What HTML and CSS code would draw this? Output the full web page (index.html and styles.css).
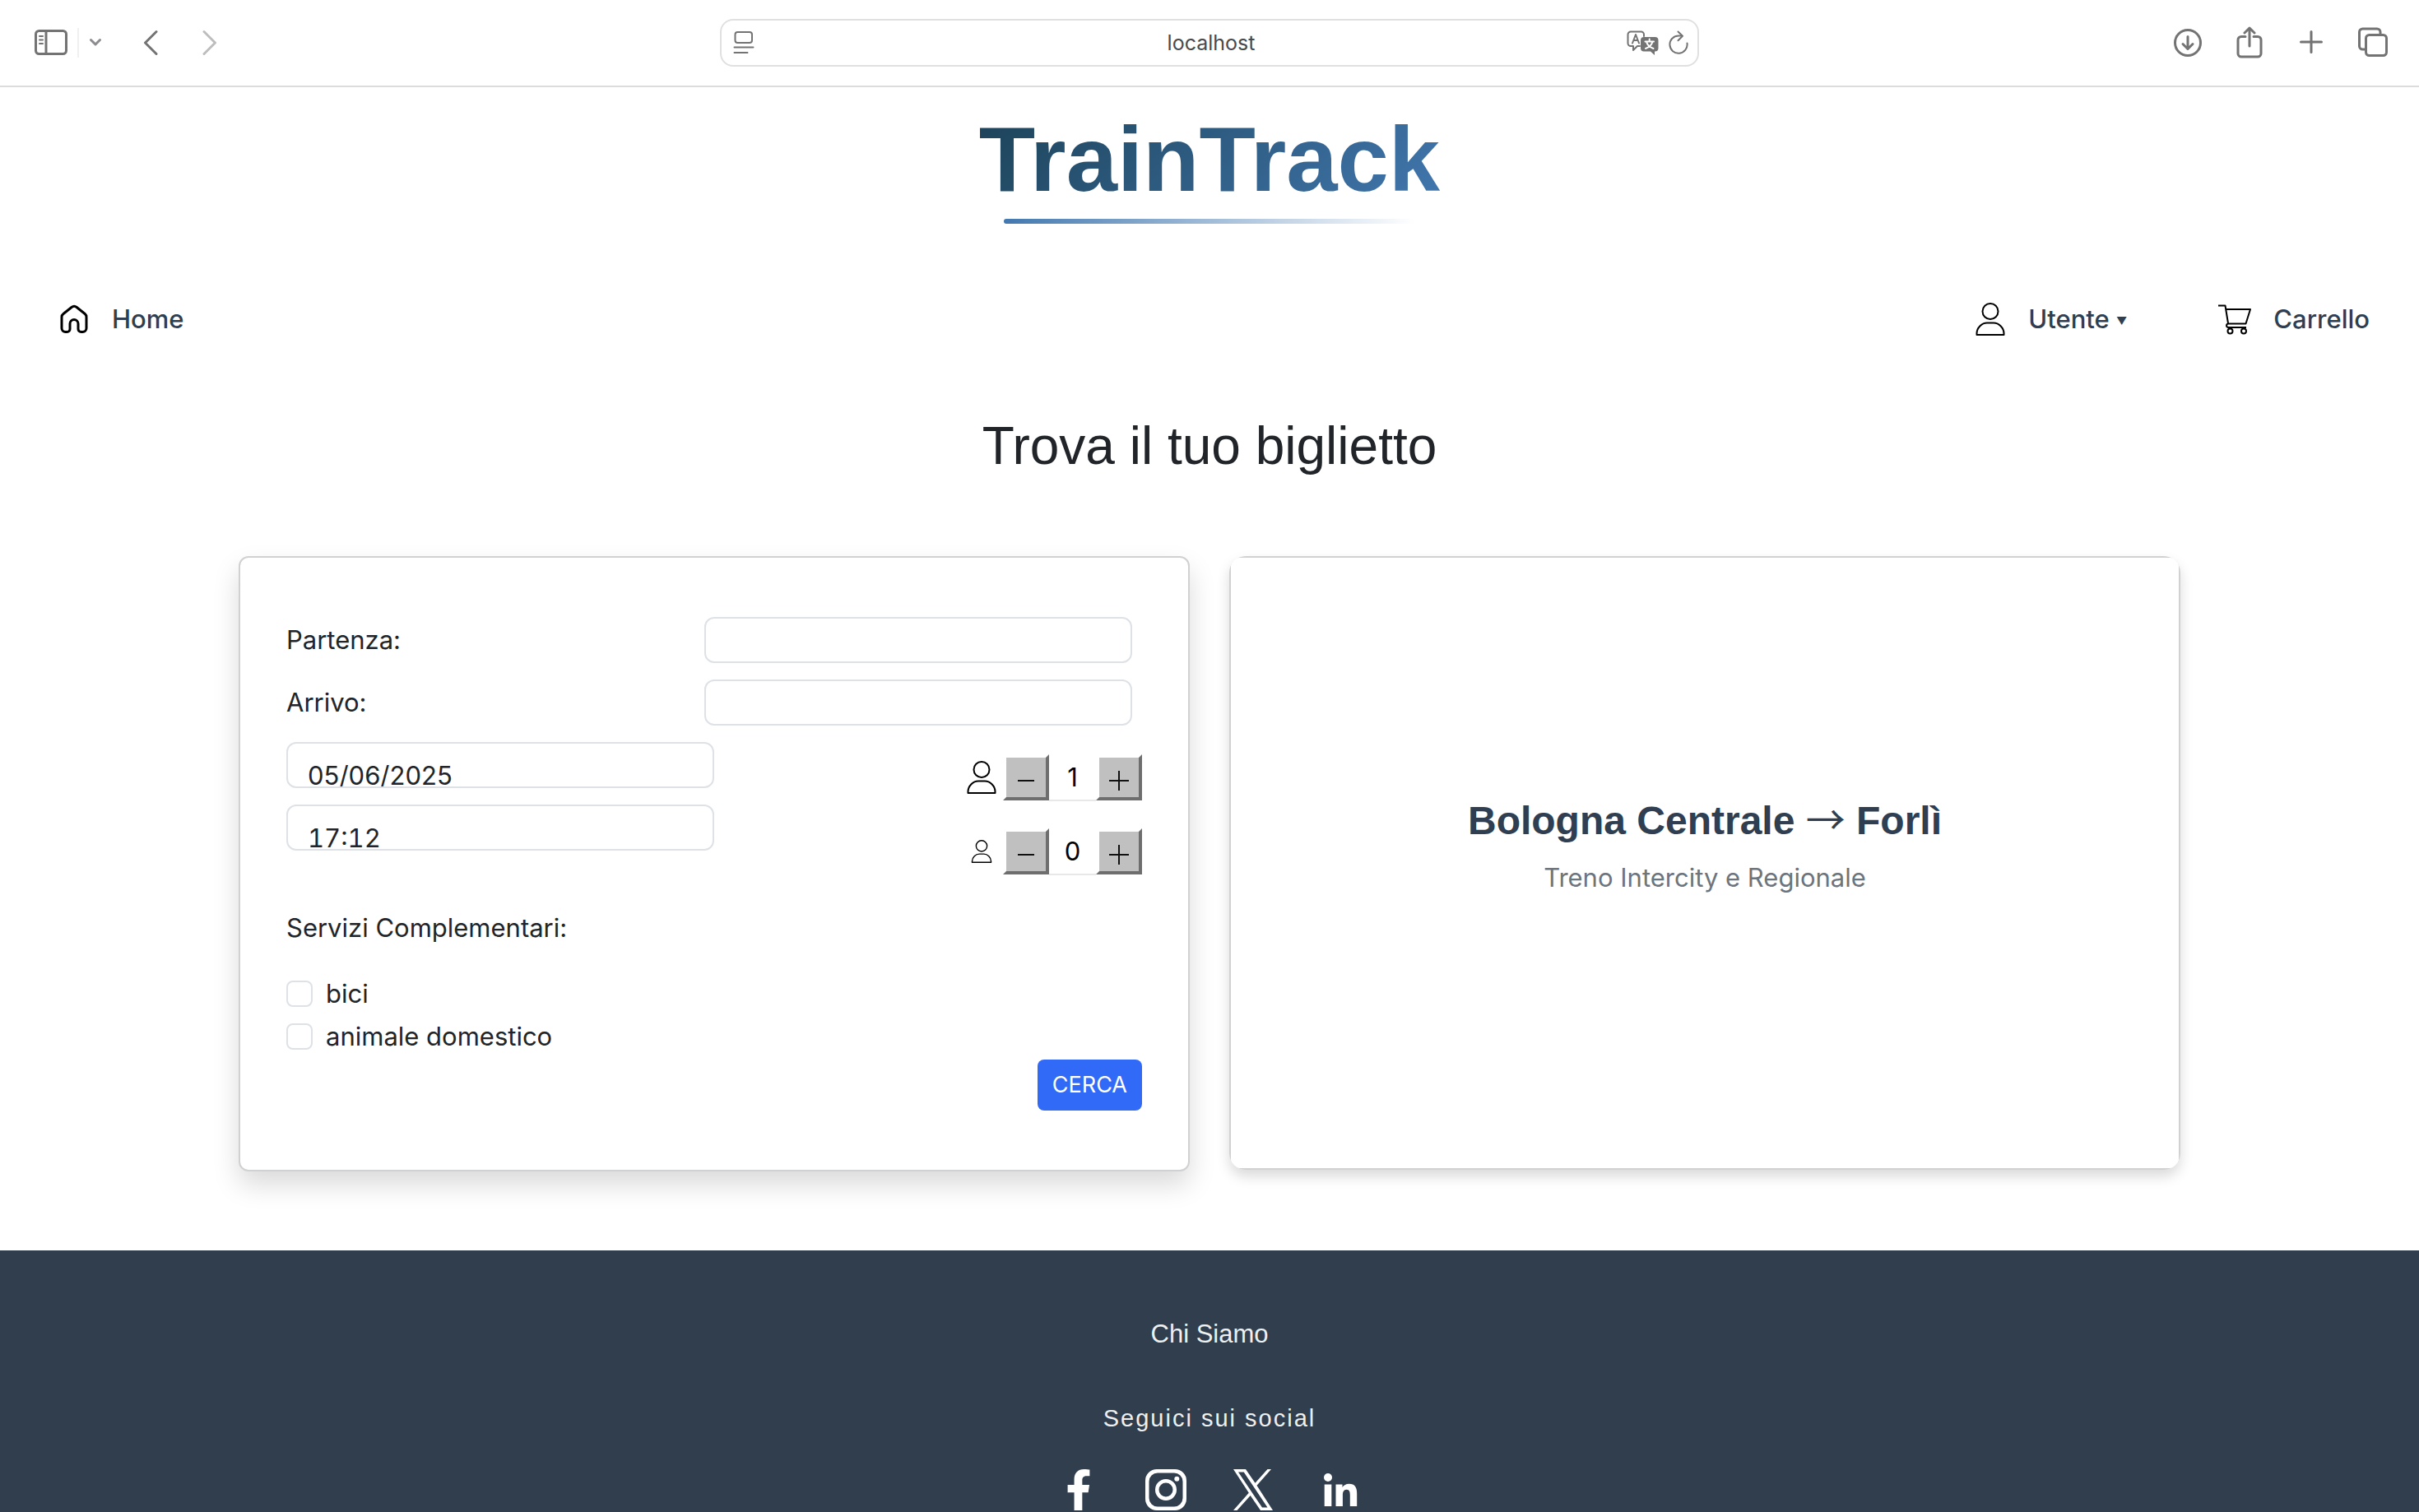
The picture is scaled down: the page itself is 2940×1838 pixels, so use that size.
FILE: index.html
```html
<!DOCTYPE html>
<html lang="it">
<head>
<meta charset="utf-8">
<meta name="viewport" content="width=device-width, initial-scale=1">
<title>TrainTrack</title>
<link rel="stylesheet" href="styles.css">
</head>
<body>
<div class="toolbar">
  <div class="toolbar-group">
    <button class="tool tool-sidebar" aria-label="Barra laterale"><svg width="40" height="32" viewBox="0 0 40 32"><rect x="1.5" y="1.5" width="37" height="28" rx="4"/><path d="M14 2v27" /><path class="thin" d="M6 8h4M6 12.500h4M6 17h4"/></svg></button>
    <span class="tool-divider"></span>
    <button class="tool tool-chevron" aria-label="Gruppi di pannelli"><svg width="16" height="12" viewBox="0 0 16 12"><path d="M2.500 2.500 8 8l5.500-5.500"/></svg></button>
    <button class="tool tool-back" aria-label="Indietro"><svg width="18" height="32" viewBox="0 0 18 32"><path d="M16 2.500 2.500 16 16 29.500"/></svg></button>
    <button class="tool tool-forward" aria-label="Avanti" disabled><svg width="18" height="32" viewBox="0 0 18 32"><path d="M2 2.500 15.500 16 2 29.500"/></svg></button>
  </div>
  <div class="address">
    <svg width="26" height="30" viewBox="0 0 26 30"><rect x="2.500" y="2" width="20.500" height="13" rx="3"/><path d="M1.500 20.500h23M1.500 27h16"/></svg>
    <span class="address-text">localhost</span>
    <span class="address-tools">
      <svg width="40" height="30" viewBox="0 0 40 30"><path class="thin" d="M16 19h-3l-5 5v-5H5a3.500 3.500 0 0 1-3.500-3.500V5A3.500 3.500 0 0 1 5 1.500h12.500A3.500 3.500 0 0 1 21 5v2"/><path class="thin" d="M7 15.500 11 5l4 10.500M8.500 12h5"/><path class="solid" d="M21 8h13.500a4 4 0 0 1 4 4v9.500a4 4 0 0 1-4 4H34V30l-5-4.500h-8a4 4 0 0 1-4-4V12a4 4 0 0 1 4-4z"/><path class="cut" d="M22.500 13.500h10.500M27.700 10.500v3M31.500 13.500c-1 4-4.500 7-8.500 8.500M24 13.500c1 4 4.500 7 8.500 8.500"/></svg>
      <svg width="26" height="30" viewBox="0 0 26 30"><path d="M23.500 15.500A10.600 10.600 0 1 1 13 6.500h4"/><path d="M12.500 1.500 18 6.700l-5.500 5.500"/></svg>
    </span>
  </div>
  <div class="toolbar-group toolbar-end">
    <button class="tool" aria-label="Download"><svg width="36" height="40" viewBox="0 0 36 40"><circle cx="18" cy="20" r="15.500"/><path d="M18 12.500v15M12 21.500l6 6 6-6"/></svg></button>
    <button class="tool" aria-label="Condividi"><svg width="36" height="40" viewBox="0 0 36 40"><path d="M13 12.500H8a4 4 0 0 0-4 4V33a4 4 0 0 0 4 4h20a4 4 0 0 0 4-4V16.500a4 4 0 0 0-4-4h-5M18 24V3M12 8l6-6 6 6"/></svg></button>
    <button class="tool" aria-label="Nuovo pannello"><svg width="36" height="40" viewBox="0 0 36 40"><path d="M18 6.500v25M5.500 19h25"/></svg></button>
    <button class="tool" aria-label="Panoramica pannelli"><svg width="36" height="40" viewBox="0 0 36 40"><path d="M9 28H5.500a4 4 0 0 1-4-4V7a4 4 0 0 1 4-4H23a4 4 0 0 1 4 4v3"/><rect x="9.500" y="10.500" width="25" height="25" rx="4"/></svg></button>
  </div>
</div>

<header class="site-header">
  <h1 class="logo"><span class="logo-text">TrainTrack</span></h1>
  <nav class="nav">
    <a class="nav-link" href="#"><svg width="40" height="40" viewBox="0 0 40 40" class="icon-bold"><path d="M5 17.500a5 5 0 0 1 2-4L17 5.500a5 5 0 0 1 6.200 0l10 8a5 5 0 0 1 1.800 4V31a4.500 4.500 0 0 1-4.500 4.500h-2A3.500 3.500 0 0 1 25 32v-6.500a5 5 0 0 0-10 0V32a3.500 3.500 0 0 1-3.500 3.500h-2A4.500 4.500 0 0 1 5 31z"/></svg>Home</a>
    <div class="nav-end">
      <button class="nav-link"><svg width="40" height="40" viewBox="0 0 40 40"><circle cx="20" cy="10.500" r="9.500"/><path d="M3.500 39v-1.500C3.500 30 10 24.500 16 24.500h8c6 0 12.500 5.500 12.500 13V39z"/></svg><span>Utente <span class="caret">▼</span></span></button>
      <a class="nav-link" href="#"><svg width="42" height="40" viewBox="0 0 42 40"><path d="M1 3.500h8.500L13 25M10.500 8h29.500l-5.500 17.500H13.500c-3 0-3.500 4.500 0 4.500H35"/><circle cx="15.500" cy="34.500" r="3"/><circle cx="32" cy="34.500" r="3"/></svg>Carrello</a>
    </div>
  </nav>
</header>

<main class="main">
  <h2 class="heading">Trova il tuo biglietto</h2>
  <div class="cards">
    <form class="card search">
      <div class="field-row"><label for="from">Partenza:</label><input class="field" id="from" type="text"></div>
      <div class="field-row"><label for="to">Arrivo:</label><input class="field" id="to" type="text"></div>
      <div class="trip">
        <div class="when">
          <input class="field field-when" type="text" value="05/06/2025" aria-label="Data">
          <input class="field field-when field-time" type="text" value="17:12" aria-label="Ora">
        </div>
        <div class="passengers">
          <div class="stepper">
            <svg class="person" width="40" height="40" viewBox="0 0 40 40"><circle cx="20" cy="10.500" r="9.500"/><path d="M3.500 39v-1.500C3.500 30 10 24.500 16 24.500h8c6 0 12.500 5.500 12.500 13V39z"/></svg>
            <button class="step" type="button" aria-label="Meno adulti"><svg width="24" height="24" viewBox="0 0 24 24"><path d="M2 12h20"/></svg></button>
            <input class="count" type="text" value="1" aria-label="Adulti">
            <button class="step" type="button" aria-label="Più adulti"><svg width="24" height="24" viewBox="0 0 24 24"><path d="M0 12h24M12 0v24"/></svg></button>
          </div>
          <div class="stepper">
            <svg class="person" width="28" height="28" viewBox="0 0 40 40"><circle cx="20" cy="10.500" r="9.500"/><path d="M3.500 39v-1.500C3.500 30 10 24.500 16 24.500h8c6 0 12.500 5.500 12.500 13V39z"/></svg>
            <button class="step" type="button" aria-label="Meno bambini"><svg width="24" height="24" viewBox="0 0 24 24"><path d="M2 12h20"/></svg></button>
            <input class="count" type="text" value="0" aria-label="Bambini">
            <button class="step" type="button" aria-label="Più bambini"><svg width="24" height="24" viewBox="0 0 24 24"><path d="M0 12h24M12 0v24"/></svg></button>
          </div>
        </div>
      </div>
      <fieldset class="extras">
        <legend>Servizi Complementari:</legend>
        <label class="check"><input type="checkbox">bici</label>
        <label class="check"><input type="checkbox">animale domestico</label>
      </fieldset>
      <button class="submit" type="button">CERCA</button>
    </form>
    <div class="offer">
      <section class="offer-body">
        <h3 class="route">Bologna Centrale <span class="arrow">→</span> Forlì</h3>
        <p class="train">Treno Intercity e Regionale</p>
      </section>
    </div>
  </div>
</main>

<footer class="footer">
  <a class="about" href="#">Chi Siamo</a>
  <p class="follow">Seguici sui social</p>
  <div class="social">
    <a href="#" aria-label="Facebook"><svg width="50" height="50" viewBox="-96 0 512 512"><path d="M279.140 288l14.220-92.660h-88.910v-60.130c0-25.350 12.420-50.060 52.240-50.060h40.420V6.260S260.430 0 225.360 0c-73.220 0-121.080 44.380-121.080 124.720v70.620H22.890V288h81.390v224h100.170V288z"/></svg></a>
    <a href="#" aria-label="Instagram"><svg width="50" height="50" viewBox="0 0 50 50"><path fill-rule="evenodd" d="M14 0h22a14 14 0 0 1 14 14v22a14 14 0 0 1-14 14H14A14 14 0 0 1 0 36V14A14 14 0 0 1 14 0zm1 4.500A10.500 10.500 0 0 0 4.500 15v20A10.500 10.500 0 0 0 15 45.500h20A10.500 10.500 0 0 0 45.500 35V15A10.500 10.500 0 0 0 35 4.500zM25 12a13 13 0 1 1 0 26 13 13 0 0 1 0-26zm0 4.500a8.500 8.500 0 1 0 0 17 8.500 8.500 0 0 0 0-17z"/><circle cx="38.300" cy="11.700" r="3"/></svg></a>
    <a href="#" aria-label="X"><svg width="50" height="50" viewBox="0 0 50 50"><path fill-rule="evenodd" d="M1 0h15l11.500 16.800L42.500 0H47L29.500 19.800 49 50H34L21.700 31.900 5.500 50H1l18.800-21.200zm6 3.500L36 46.500h6.500L13.700 3.500z"/></svg></a>
    <a href="#" aria-label="LinkedIn"><svg width="50" height="50" viewBox="0 0 50 50"><circle cx="10" cy="10" r="5"/><path d="M5.700 18.500h8.600V45H5.700zM19.500 18.500h8V22c1.500-2.500 4.500-4.200 8-4.200 7.500 0 9.700 4.500 9.700 12V45h-8.400V31.500c0-3.500-.5-6.800-4.200-6.800s-4.700 3-4.700 6.500V45h-8.400z"/></svg></a>
  </div>
</footer>
</body>
</html>
```
FILE: styles.css
```css
* { box-sizing: border-box; }

body {
  margin: 0;
  min-height: 100vh;
  display: flex;
  flex-direction: column;
  background: #fff;
  color: #212529;
  font: 400 31px/48px Inter, "Liberation Sans", sans-serif;
}

h1, h2, h3, p { margin: 0; }
svg { display: block; flex: none; }
a { color: inherit; text-decoration: none; }
button, input { font: inherit; color: inherit; }

/* browser toolbar */
.toolbar {
  height: 106px;
  display: grid;
  grid-template-columns: 1fr 1190px 1fr;
  align-items: center;
  border-bottom: 2px solid #dcdcdc;
}
.toolbar svg {
  fill: none;
  stroke: #737373;
  stroke-width: 3;
  stroke-linecap: round;
  stroke-linejoin: round;
}
.toolbar svg .thin { stroke-width: 2; }
.toolbar svg .solid { fill: #737373; stroke: none; }
.toolbar svg .cut { stroke: #fff; stroke-width: 2; }
.toolbar-group { display: flex; align-items: center; padding-left: 42px; }
.toolbar-end { justify-content: flex-end; gap: 39px; padding: 0 38px 0 0; }
.tool { padding: 0; border: 0; background: none; }
.tool-divider { width: 2px; height: 36px; margin: 0 12px; background: #f0f0f0; }
.tool-chevron svg { stroke: #8b8b90; }
.tool-back { margin-left: 50px; }
.tool-forward { margin-left: 54px; }
.tool-forward svg { stroke: #bdbdbd; }
.address {
  height: 58px;
  display: grid;
  grid-template-columns: 1fr auto 1fr;
  align-items: center;
  padding: 0 10px 0 14px;
  border: 2px solid #e0e0e0;
  border-radius: 16px;
}
.address svg { stroke-width: 2; }
.address-text { color: #4a4a4a; font-size: 25px; line-height: 32px; }
.address-tools { display: flex; justify-content: flex-end; gap: 10px; }

/* header */
.site-header { padding-top: 24px; }
.logo {
  width: fit-content;
  margin: 0 auto;
  display: flex;
  flex-direction: column;
  align-items: center;
  font: 700 112px/128px "Liberation Sans", Arial, sans-serif;
}
.logo-text {
  background: linear-gradient(135deg, #1c4257, #4278b0);
  -webkit-background-clip: text;
  background-clip: text;
  color: transparent;
}
.logo::after {
  content: "";
  width: 500px;
  height: 6px;
  margin-top: 8px;
  border-radius: 3px;
  background: linear-gradient(90deg, #4278b0, transparent);
}
.nav {
  display: flex;
  justify-content: space-between;
  margin-top: 76px;
  padding: 0 60px 0 70px;
  color: #2f3e50;
  font-weight: 500;
  line-height: 80px;
}
.nav-end { display: flex; gap: 110px; }
.nav-link {
  display: flex;
  align-items: center;
  gap: 26px;
  padding: 0;
  border: 0;
  background: none;
}
.nav svg, .person {
  fill: none;
  stroke: #000;
  stroke-width: 2;
  stroke-linejoin: round;
}
.nav .icon-bold { stroke-width: 3; }
.caret { font-size: 13px; line-height: 1; vertical-align: middle; }

/* search area */
.main { padding-bottom: 96px; }
.heading {
  margin-top: 76px;
  text-align: center;
  font: 400 64px/76px "Liberation Sans", Arial, sans-serif;
}
.cards {
  max-width: 2360px;
  margin: 96px auto 0;
  display: grid;
  grid-template-columns: 1fr 1fr;
  align-items: start;
  gap: 48px;
}
.card {
  border: 2px solid #d0d1d2;
  border-radius: 12px;
  background: #fff;
  box-shadow: 0 16px 32px rgba(0, 0, 0, .15);
}
.search {
  display: flex;
  flex-direction: column;
  padding: 72px 56px;
}
.field-row {
  display: grid;
  grid-template-columns: 1fr 520px;
  align-items: center;
  margin-bottom: 20px;
  padding-right: 12px;
}
.field {
  width: 520px;
  height: 56px;
  padding: 0 24px;
  border: 2px solid #dee2e6;
  border-radius: 12px;
  background: #fff;
  outline: 0;
}
.field-when { padding-top: 24px; }
.field-time { font-variant-numeric: tabular-nums; }
.trip { display: flex; justify-content: space-between; }
.when { display: flex; flex-direction: column; gap: 20px; }
.passengers {
  display: flex;
  flex-direction: column;
  gap: 32px;
  padding-top: 14px;
}
.stepper {
  display: grid;
  grid-template-columns: 46px 56px 57px 56px;
  align-items: center;
}
.person { justify-self: center; margin-right: 6px; }
.step {
  width: 56px;
  height: 56px;
  display: grid;
  place-items: center;
  padding: 8px 0 0;
  border: 4px solid;
  border-color: #fff #6e6e6e #6e6e6e #fff;
  background: #c0c0c0;
}
.step svg { stroke: #111; stroke-width: 2; }
.count {
  width: 57px;
  height: 58px;
  padding: 0;
  border: 0;
  border-bottom: 2px solid #e8e8e8;
  background: #fff;
  color: #000;
  text-align: center;
}
.extras {
  display: flex;
  flex-direction: column;
  gap: 4px;
  margin: 40px 0 0;
  padding: 0;
  border: 0;
}
.extras legend { padding: 0; margin-bottom: 32px; }
.check { display: flex; align-items: center; gap: 16px; }
.check input {
  width: 32px;
  height: 32px;
  margin: 0;
  appearance: none;
  border: 2px solid #dee2e6;
  border-radius: 8px;
  background: #fff;
}
.submit {
  align-self: flex-end;
  height: 62px;
  margin-top: 4px;
  padding: 0 18px;
  border: 0;
  border-radius: 8px;
  background: #306af6;
  color: #fff;
  font-size: 27px;
}
.offer {
  overflow: hidden;
  height: 746px;
  border-radius: 20px;
  box-shadow: 0 8px 16px rgba(0, 0, 0, .15);
}
.offer-body {
  height: 100%;
  display: flex;
  flex-direction: column;
  align-items: center;
  justify-content: center;
  padding-bottom: 38px;
  border: 2px solid #d0d1d2;
  border-radius: 12px;
}
.route {
  color: #2f3e50;
  font: 700 48px/58px "Liberation Sans", Arial, sans-serif;
}
.arrow { font-family: "Noto Sans CJK JP", sans-serif; font-weight: 400; line-height: 1; }
.train { margin-top: 16px; color: #6c757d; }

/* footer */
.footer {
  flex: 1;
  display: flex;
  flex-direction: column;
  align-items: center;
  padding-top: 78px;
  background: #313e4e;
  color: #ecf0f1;
  font: 400 31px/48px "Liberation Sans", Arial, sans-serif;
}
.follow {
  margin-top: 54px;
  font-size: 29px;
  letter-spacing: 2px;
}
.social { display: flex; gap: 56px; margin-top: 38px; }
.social svg { fill: #fff; }
```
